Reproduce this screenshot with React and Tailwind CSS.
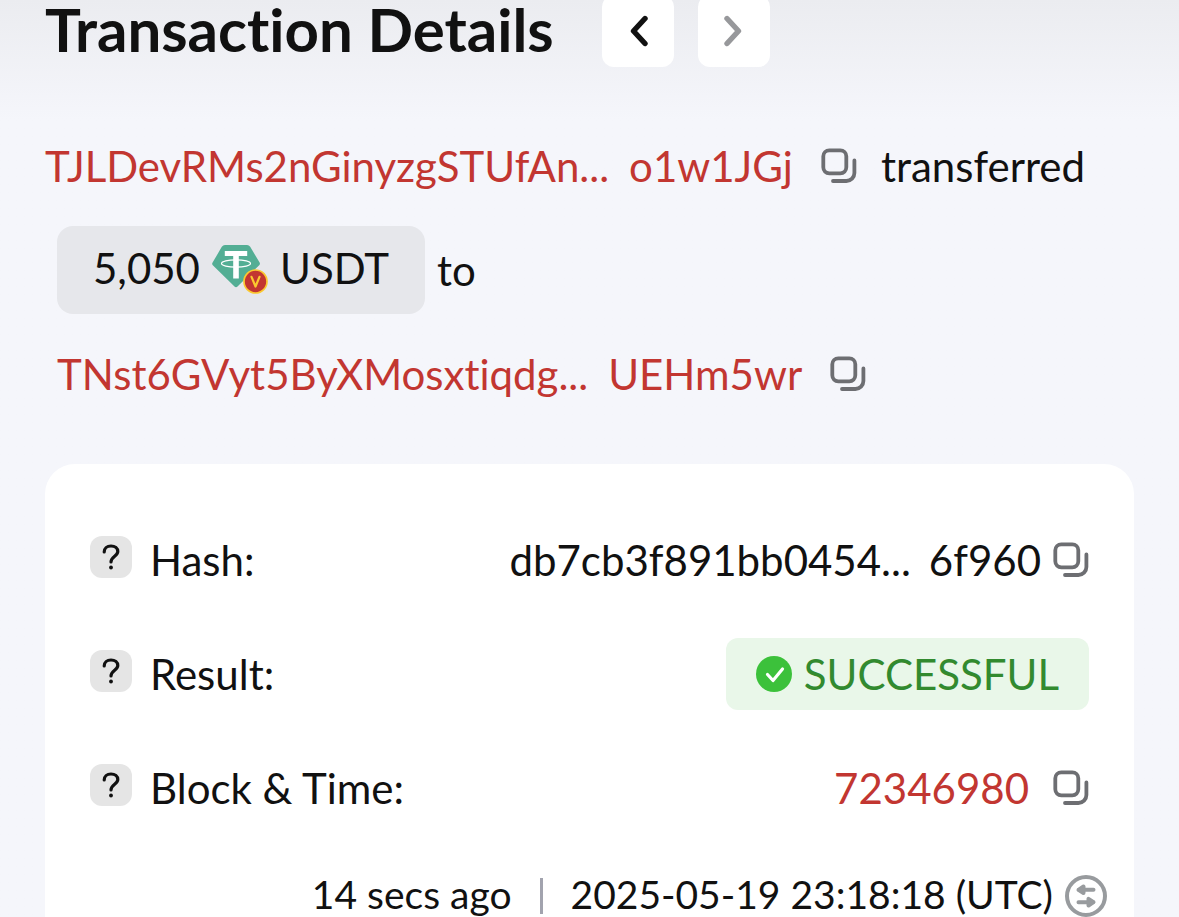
import React from 'react';

const addressLink = 'text-[#c23631] whitespace-nowrap';

function CopyButton({ label, className = '' }) {
    return (
        <button type="button" aria-label={label} className={`shrink-0 ${className}`}>
            <svg width="36" height="36" viewBox="0 0 36 36" fill="none" stroke="#6d6e72" strokeWidth="3.8" strokeLinecap="round">
                <rect x="2.3" y="2.3" width="23" height="23" rx="6" />
                <path d="M33.4 12.5V25a8 8 0 0 1-8 8H12" />
            </svg>
        </button>
    );
}

function UsdtIcon() {
    return (
        <svg width="56" height="50" viewBox="0 0 56 50" className="shrink-0" aria-hidden="true">
            <path d="M9.800 1.800Q11 0 13 0H35Q37 0 38.200 1.800L47.600 17.600Q48.400 19 47.200 20.200L25.500 41.500Q24 42.800 22.500 41.500L.8 20.200Q-.4 19 .6 17.600Z" fill="#53ae94" />
            <path d="M12.800 6H35.200V11H26.800V33.500H21.200V11H12.800Z" fill="#fff" />
            <ellipse cx="24" cy="18.500" rx="14.500" ry="3.600" fill="none" stroke="#fff" strokeWidth="1.200" />
            <circle cx="43.500" cy="36.500" r="11.500" fill="#c23631" stroke="#fbc92f" strokeWidth="1.700" />
            <path d="M39.500 31.800L43.500 41.500L47.500 31.800" fill="none" stroke="#fbc92f" strokeWidth="2.200" strokeLinecap="round" strokeLinejoin="round" />
        </svg>
    );
}

function SwitchIcon() {
    return (
        <svg width="42" height="42" viewBox="0 0 42 42" fill="none" stroke="#989b9e" strokeLinecap="round" strokeLinejoin="round">
            <circle cx="21" cy="21" r="19" strokeWidth="4" />
            <path d="M14 14.800H28.500M13.500 27.200H28" strokeWidth="4" />
            <path d="M18.500 11.500V18.100L13.500 14.800ZM23.500 23.900V30.500L28.500 27.200Z" fill="#989b9e" strokeWidth="4" />
        </svg>
    );
}

// Label on the left with its help button, value on the right
function DetailRow({ label, children }) {
    return (
        <div className="flex items-center justify-between h-[114px]">
            <div className="flex items-center gap-[18px]">
                <button type="button" aria-label={`About ${label}`} className="-mt-1.5 grid place-items-center size-[42px] rounded-xl bg-[#e5e5e5]">
                    <svg width="18" height="26" viewBox="0 0 18 26" fill="none" stroke="#111" strokeWidth="3.2" strokeLinecap="round">
                        <path d="M2.200 8C2.200 4.300 5 2 9 2S15.800 4.400 15.800 7.600C15.800 12.200 9 12.400 9 18" />
                        <circle cx="9" cy="23.500" r="1.900" fill="#111" stroke="none" />
                    </svg>
                </button>
                <span>{label}:</span>
            </div>
            <div className="flex items-center">{children}</div>
        </div>
    );
}

export default function App() {
    return (
        <div className="flex flex-col h-screen overflow-hidden bg-[#f5f6fb] bg-linear-to-b from-[#ebecf0] to-[#f5f6fb] to-[120px] px-[45px] font-['Lato',sans-serif] [font-variant-ligatures:none] text-[42px] leading-[52px] text-[#111]">
            <header className="flex items-center -mt-[5px] shrink-0">
                <h1 className="pb-1 text-[60px] leading-[56px] font-bold whitespace-nowrap">Transaction Details</h1>
                <div className="flex gap-6 ml-12">
                    <button type="button" aria-label="Previous transaction" className="grid place-items-center size-[72px] rounded-xl bg-white">
                        <svg width="20" height="32" viewBox="0 0 20 32" fill="none" stroke="#111" strokeWidth="5.4" strokeLinecap="round" strokeLinejoin="round">
                            <path d="M17 3.500L5.500 16L17 28.500" />
                        </svg>
                    </button>
                    <button type="button" aria-label="Next transaction" disabled className="grid place-items-center size-[72px] rounded-xl bg-white">
                        <svg width="20" height="32" viewBox="0 0 20 32" fill="none" stroke="#97989b" strokeWidth="5.4" strokeLinecap="round" strokeLinejoin="round">
                            <path d="M3 3.500L14.500 16L3 28.500" />
                        </svg>
                    </button>
                </div>
            </header>

            {/* Transfer summary */}
            <section className="mt-[47px] shrink-0">
                <div className="flex items-center h-[104px]">
                    <a href="#from" className={addressLink}>TJLDevRMs2nGinyzgSTUfAn...</a>
                    <a href="#from" className={`ml-5 ${addressLink}`}>o1w1JGj</a>
                    <CopyButton label="Copy sender address" className="ml-7" />
                    <span className="ml-6">transferred</span>
                </div>
                <div className="flex items-center h-[104px] ml-3">
                    <div className="flex items-center h-[88px] px-9 rounded-2xl bg-[#e6e7eb]">
                        <span className="pb-1">5,050</span>
                        <span className="ml-3"><UsdtIcon /></span>
                        <span className="ml-3 pb-1">USDT</span>
                    </div>
                    <span className="ml-3">to</span>
                </div>
                <div className="flex items-center h-[104px] ml-3">
                    <a href="#to" className={addressLink}>TNst6GVyt5ByXMosxtiqdg...</a>
                    <a href="#to" className={`ml-5 ${addressLink}`}>UEHm5wr</a>
                    <CopyButton label="Copy recipient address" className="ml-7" />
                </div>
            </section>

            <main className="grow mt-[38px] pt-[39px] px-[45px] rounded-t-[30px] bg-white">
                <DetailRow label="Hash">
                    <span>db7cb3f891bb0454...</span>
                    <span className="ml-[18px]">6f960</span>
                    <CopyButton label="Copy hash" className="ml-3" />
                </DetailRow>
                <DetailRow label="Result">
                    <div className="flex items-center gap-3 h-[72px] px-[30px] rounded-xl bg-[#e9f7e9] text-[#328a2f]">
                        <svg width="36" height="36" viewBox="0 0 36 36" fill="none">
                            <circle cx="18" cy="18" r="18" fill="#3cc13b" />
                            <path d="M11.500 18.500L17 24.500L26.500 13" stroke="#fff" strokeWidth="3.200" strokeLinecap="round" strokeLinejoin="round" />
                        </svg>
                        <span>SUCCESSFUL</span>
                    </div>
                </DetailRow>
                <DetailRow label="Block & Time">
                    <a href="#block" className={addressLink}>72346980</a>
                    <CopyButton label="Copy block number" className="ml-6" />
                </DetailRow>
                <div className="flex items-center justify-end h-[102px] -mr-[18px] text-[39px] leading-10 whitespace-nowrap">
                    <span className="pb-1">14 secs ago</span>
                    <span className="w-[3px] h-9 mx-7 bg-[#a2a3ae]" />
                    <time className="pb-1">2025-05-19 23:18:18 (UTC)</time>
                    <button type="button" aria-label="Switch time zone" className="ml-3">
                        <SwitchIcon />
                    </button>
                </div>
            </main>
        </div>
    );
}
